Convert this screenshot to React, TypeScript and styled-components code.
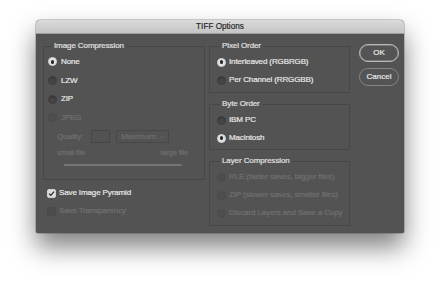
import styled, { createGlobalStyle } from "styled-components";

const GlobalStyle = createGlobalStyle`
  html, body {
    margin: 0;
    padding: 0;
    background: #ffffff;
  }
  body {
    font-family: "Liberation Sans", Arial, sans-serif;
    font-size: 8px;
    color: #e6e6e6;
    padding-bottom: 60px;
  }
`;

type Opt = { label: string; checked?: boolean; disabled?: boolean };

const compression: Opt[] = [
  { label: "None", checked: true },
  { label: "LZW" },
  { label: "ZIP" },
  { label: "JPEG", disabled: true },
];

function RadioOption({ opt, gap }: { opt: Opt; gap: number }) {
  return (
    <OptionRow $gap={gap}>
      <Radio $checked={opt.checked} $disabled={opt.disabled} />
      <Label $disabled={opt.disabled}>{opt.label}</Label>
    </OptionRow>
  );
}

export default function App() {
  return (
    <>
      <GlobalStyle />
      <Dialog>
        <TitleBar>TIFF Options</TitleBar>
        <Body>
          <LeftColumn>
            <Group $height={139} $inset={8}>
              <Legend>Image Compression</Legend>
              <OptionList $pad={4} $top={1.7} $row={18.6}>
                {compression.map((o) => (
                  <RadioOption key={o.label} opt={o} gap={4} />
                ))}
              </OptionList>
              <QualityRow>
                <Label $disabled>Quality:</Label>
                <Field />
                <Select>
                  <span>Maximum</span>
                  <Chevron viewBox="0 0 6 4">
                    <path d="M0.5 0.8 L3 3.2 L5.5 0.8" />
                  </Chevron>
                </Select>
              </QualityRow>
              <SizeLabels>
                <Label $disabled>small file</Label>
                <Label $disabled>large file</Label>
              </SizeLabels>
              <Slider />
            </Group>
            <CheckList>
              <CheckRow>
                <CheckBox $checked>
                  <svg viewBox="0 0 10 10" width="7" height="7">
                    <path
                      d="M1.5 5.2 L4 7.6 L8.6 2.2"
                      fill="none"
                      stroke="#2a2a2a"
                      strokeWidth="1.8"
                    />
                  </svg>
                </CheckBox>
                <Label>Save Image Pyramid</Label>
              </CheckRow>
              <CheckRow>
                <CheckBox />
                <Label $disabled>Save Transparency</Label>
              </CheckRow>
            </CheckList>
          </LeftColumn>

          <RightColumn>
            <Group $height={52} $inset={10}>
              <Legend>Pixel Order</Legend>
              <OptionList $pad={7} $top={2} $row={18}>
                <RadioOption opt={{ label: "Interleaved (RGBRGB)", checked: true }} gap={3} />
                <RadioOption opt={{ label: "Per Channel (RRGGBB)" }} gap={3} />
              </OptionList>
            </Group>
            <Group $height={51} $inset={10} $mt={6}>
              <Legend>Byte Order</Legend>
              <OptionList $pad={7} $top={2} $row={18}>
                <RadioOption opt={{ label: "IBM PC" }} gap={3} />
                <RadioOption opt={{ label: "Macintosh", checked: true }} gap={3} />
              </OptionList>
            </Group>
            <Group $height={70} $inset={10} $mt={6}>
              <Legend>Layer Compression</Legend>
              <OptionList $pad={7} $top={2} $row={18}>
                <RadioOption opt={{ label: "RLE (faster saves, bigger files)", disabled: true }} gap={3} />
                <RadioOption opt={{ label: "ZIP (slower saves, smaller files)", disabled: true }} gap={3} />
                <RadioOption opt={{ label: "Discard Layers and Save a Copy", disabled: true }} gap={3} />
              </OptionList>
            </Group>
          </RightColumn>

          <ButtonColumn>
            <PushButton $primary>OK</PushButton>
            <PushButton>Cancel</PushButton>
          </ButtonColumn>
        </Body>
      </Dialog>
    </>
  );
}

const Dialog = styled.div`
  width: 368px;
  height: 213px;
  margin: 20px 0 0 36px;
  background: #535353;
  border-radius: 4px 4px 2px 2px;
  box-shadow: 0 14px 26px rgba(0, 0, 0, 0.5), 0 0 0 0.5px rgba(0, 0, 0, 0.35);
  overflow: hidden;
`;

const TitleBar = styled.div`
  height: 14px;
  box-sizing: border-box;
  background: linear-gradient(#dadada, #c5c5c5);
  border-bottom: 1px solid #9c9c9c;
  color: #222222;
  font-size: 8.2px;
  line-height: 14px;
  text-align: center;
  -webkit-text-stroke: 0.15px #222222;
`;

const Body = styled.div`
  display: flex;
  align-items: flex-start;
  padding: 7px 5px 0 7px;
`;

const LeftColumn = styled.div`
  width: 162px;
  display: flex;
  flex-direction: column;
`;

const RightColumn = styled.div`
  width: 141px;
  margin-left: 4px;
  display: flex;
  flex-direction: column;
`;

const ButtonColumn = styled.div`
  width: 40px;
  margin-left: 9px;
  margin-top: 3px;
  display: flex;
  flex-direction: column;
  gap: 6px;
`;

const Group = styled.fieldset<{ $height: number; $inset: number; $mt?: number }>`
  box-sizing: border-box;
  height: ${(p) => p.$height}px;
  margin: ${(p) => p.$mt ?? 0}px 0 0 0;
  padding: 0;
  min-inline-size: 0;
  border: 1px solid #474747;
  border-radius: 1px;

  legend {
    margin-left: ${(p) => p.$inset}px;
  }
`;

const Legend = styled.legend`
  padding: 0 2px;
  height: 10px;
  line-height: 10px;
  color: #e0e0e0;
  letter-spacing: -0.1px;
  -webkit-text-stroke: 0.2px #e0e0e0;
`;

const OptionList = styled.div<{ $pad: number; $top: number; $row: number }>`
  display: grid;
  grid-auto-rows: ${(p) => p.$row}px;
  padding: ${(p) => p.$top}px 0 0 ${(p) => p.$pad}px;
`;

const OptionRow = styled.div<{ $gap: number }>`
  display: flex;
  align-items: center;
  gap: ${(p) => p.$gap}px;
`;

const Radio = styled.span<{ $checked?: boolean; $disabled?: boolean }>`
  box-sizing: border-box;
  width: 9px;
  height: 9px;
  border-radius: 50%;
  flex: none;
  background: ${(p) => (p.$checked ? "#e4e4e4" : p.$disabled ? "#4e4e4e" : "#454545")};
  border: 1px solid ${(p) => (p.$checked ? "#d0d0d0" : p.$disabled ? "#4b4b4b" : "#3d3d3d")};
  box-shadow: ${(p) => (p.$disabled || p.$checked ? "none" : "inset 0 1px 1px rgba(0,0,0,0.25)")};
  display: flex;
  align-items: center;
  justify-content: center;

  &::after {
    content: "";
    display: ${(p) => (p.$checked ? "block" : "none")};
    width: 3.5px;
    height: 3.5px;
    border-radius: 50%;
    background: #2b2b2b;
  }
`;

const Label = styled.span<{ $disabled?: boolean }>`
  color: ${(p) => (p.$disabled ? "#717171" : "#e8e8e8")};
  white-space: nowrap;
  line-height: 10px;
  letter-spacing: -0.12px;
  -webkit-text-stroke: 0.2px ${(p) => (p.$disabled ? "#717171" : "#e8e8e8")};
`;

const QualityRow = styled.div`
  display: flex;
  align-items: center;
  height: 14px;
  margin-top: 2.9px;
  padding-left: 13px;
`;

const Field = styled.div`
  box-sizing: border-box;
  width: 19px;
  height: 13px;
  margin-left: 8px;
  border: 1px solid #464646;
  background: #525252;
`;

const Select = styled.div`
  box-sizing: border-box;
  width: 53px;
  height: 13px;
  margin-left: 6px;
  padding: 0 3px 0 4px;
  border: 1px solid #484848;
  border-radius: 1px;
  display: flex;
  align-items: center;
  justify-content: space-between;
  color: #6f6f6f;
  -webkit-text-stroke: 0.2px #6f6f6f;
`;

const Chevron = styled.svg`
  width: 5px;
  height: 4px;
  fill: none;
  stroke: #6a6a6a;
  stroke-width: 0.9;
`;

const SizeLabels = styled.div`
  display: flex;
  justify-content: space-between;
  margin-top: 4px;
  padding: 0 16px 0 13px;
  font-size: 7.6px;
`;

const Slider = styled.div`
  height: 2px;
  margin: 6px 22px 0 20px;
  border-radius: 1px;
  background: #767676;
`;

const CheckList = styled.div`
  display: grid;
  grid-auto-rows: 18px;
  margin-top: 4px;
  padding-left: 4px;
`;

const CheckRow = styled.div`
  display: flex;
  align-items: center;
  gap: 3px;
`;

const CheckBox = styled.span<{ $checked?: boolean }>`
  box-sizing: border-box;
  width: 9px;
  height: 9px;
  flex: none;
  border-radius: 2px;
  background: ${(p) => (p.$checked ? "#dcdcdc" : "#4d4d4d")};
  border: 1px solid ${(p) => (p.$checked ? "#cfcfcf" : "#494949")};
  display: flex;
  align-items: center;
  justify-content: center;
`;

const PushButton = styled.button<{ $primary?: boolean }>`
  box-sizing: border-box;
  width: 40px;
  height: 18px;
  padding: 0;
  border-radius: 9px;
  border: 1px solid ${(p) => (p.$primary ? "#b8b8b8" : "#858585")};
  box-shadow: ${(p) => (p.$primary ? "inset 0 0 0 0.5px #9a9a9a" : "none")};
  background: #545454;
  color: #e8e8e8;
  font-family: "Liberation Sans", Arial, sans-serif;
  font-size: 8px;
  line-height: 16px;
  -webkit-text-stroke: 0.2px #e8e8e8;
`;
